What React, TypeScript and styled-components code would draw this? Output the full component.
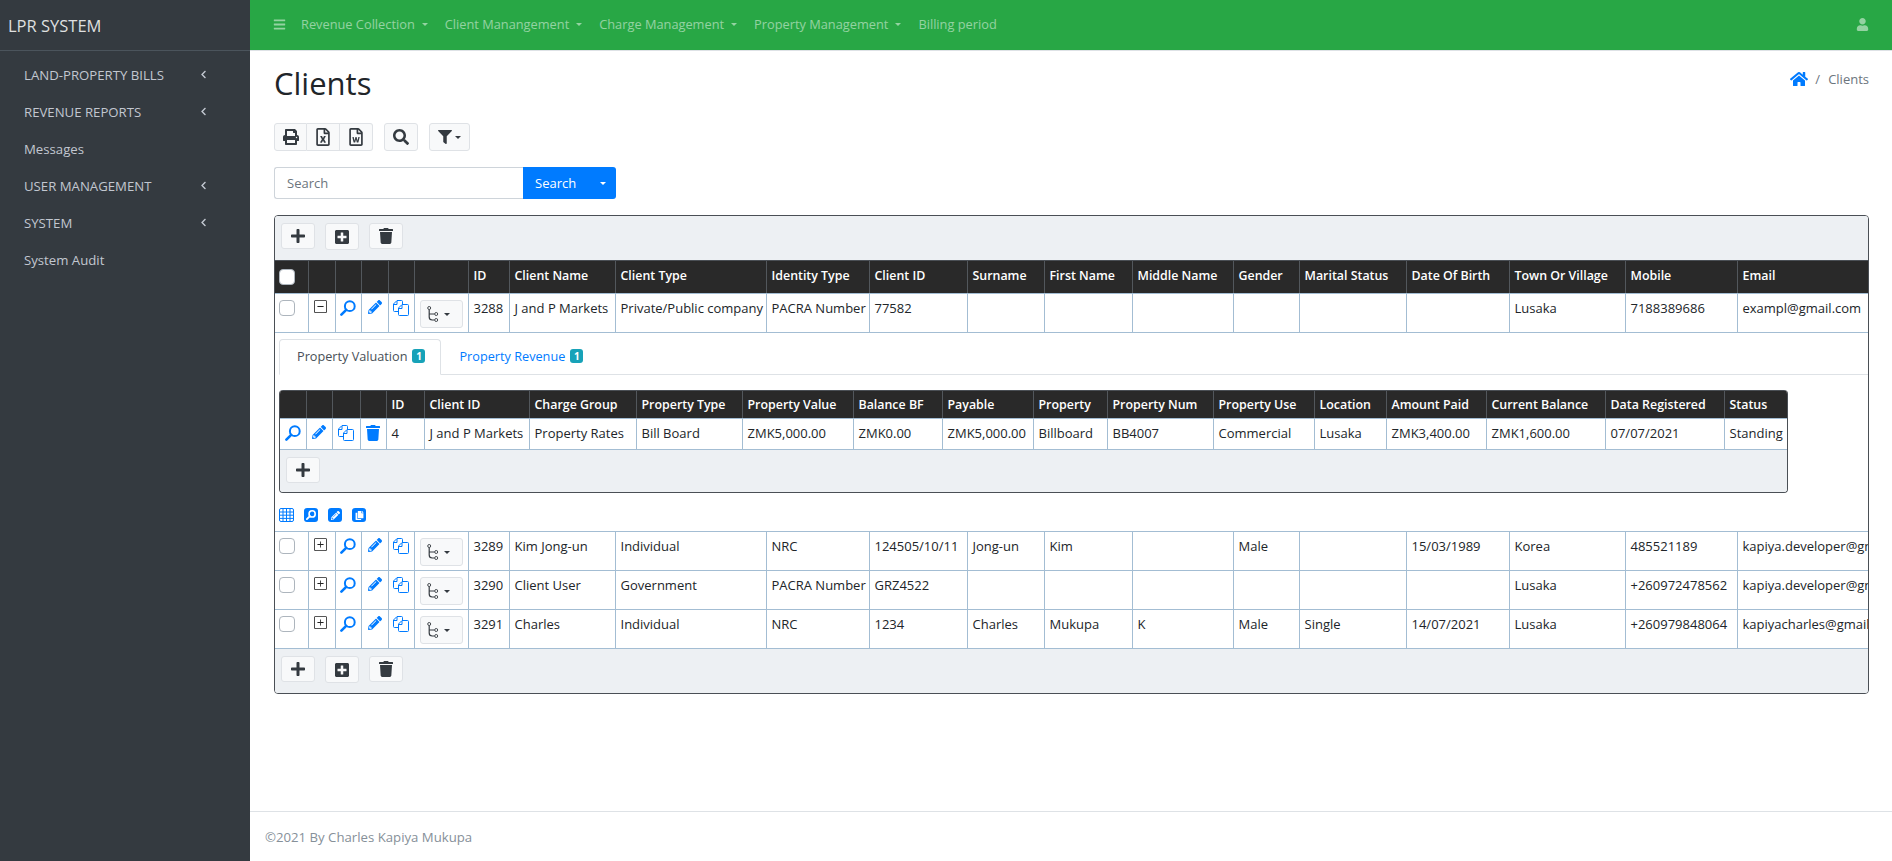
import React from 'react';
import styled, { createGlobalStyle } from 'styled-components';
import {
  FaBars, FaUser, FaHome, FaPrint, FaRegFileExcel, FaRegFileWord, FaSearch, FaFilter,
  FaPlus, FaPlusSquare, FaTrash, FaPencilAlt, FaChevronLeft, FaCopy,
} from 'react-icons/fa';
import { BsDashSquare, BsPlusSquare } from 'react-icons/bs';

const colors = {
  BLUE: '#007bff',
  GREEN: '#28a745',
  SIDEBAR: '#343a40',
  LINE: '#a3bdd3',
  HEAD: '#292929',
  TOOLBAR: '#edf0f3',
  DARK: '#343a40',
};

const GlobalStyle = createGlobalStyle`
  html, body { margin: 0; padding: 0; height: 100%; }
  body {
    font-family: "Open Sans", "Noto Sans", sans-serif;
    font-size: 13px;
    color: #212529;
    background: #fff;
    overflow: hidden;
  }
  * { box-sizing: border-box; }
`;

const mainCols = [33, 27, 26, 27, 26, 54, 41, 106, 151, 103, 98, 77, 88, 101, 66, 107, 103, 116, 112, 300];
const mainHeads = ['ID', 'Client Name', 'Client Type', 'Identity Type', 'Client ID', 'Surname', 'First Name', 'Middle Name', 'Gender', 'Marital Status', 'Date Of Birth', 'Town Or Village', 'Mobile', 'Email'];

const clientRows = [
  ['3289', 'Kim Jong-un', 'Individual', 'NRC', '124505/10/11', 'Jong-un', 'Kim', '', 'Male', '', '15/03/1989', 'Korea', '485521189', 'kapiya.developer@gmail.com'],
  ['3290', 'Client User', 'Government', 'PACRA Number', 'GRZ4522', '', '', '', '', '', '', 'Lusaka', '+260972478562', 'kapiya.developer@gmail.com'],
  ['3291', 'Charles', 'Individual', 'NRC', '1234', 'Charles', 'Mukupa', 'K', 'Male', 'Single', '14/07/2021', 'Lusaka', '+260979848064', 'kapiyacharles@gmail.com'],
];
const firstRow = ['3288', 'J and P Markets', 'Private/Public company', 'PACRA Number', '77582', '', '', '', '', '', '', 'Lusaka', '7188389686', 'exampl@gmail.com'];

const subCols = [26, 26, 28, 26, 38, 105, 107, 106, 111, 89, 91, 74, 106, 101, 72, 100, 119, 119, 65];
const subHeads = ['ID', 'Client ID', 'Charge Group', 'Property Type', 'Property Value', 'Balance BF', 'Payable', 'Property', 'Property Num', 'Property Use', 'Location', 'Amount Paid', 'Current Balance', 'Data Registered', 'Status'];
const subRow = ['4', 'J and P Markets', 'Property Rates', 'Bill Board', 'ZMK5,000.00', 'ZMK0.00', 'ZMK5,000.00', 'Billboard', 'BB4007', 'Commercial', 'Lusaka', 'ZMK3,400.00', 'ZMK1,600.00', '07/07/2021', 'Standing'];

const sideItems = [
  { label: 'LAND-PROPERTY BILLS', more: true },
  { label: 'REVENUE REPORTS', more: true },
  { label: 'Messages', more: false },
  { label: 'USER MANAGEMENT', more: true },
  { label: 'SYSTEM', more: true },
  { label: 'System Audit', more: false },
];

const topItems = [
  { label: 'Revenue Collection', more: true },
  { label: 'Client Manangement', more: true },
  { label: 'Charge Management', more: true },
  { label: 'Property Management', more: true },
  { label: 'Billing period', more: false },
];

const MagnifierIcon = ({ size = 16 }: { size?: number }) => (
  <svg width={size} height={size} viewBox="0 0 16 16" fill="none" stroke={colors.BLUE}>
    <circle cx="9.8" cy="6.2" r="4.9" strokeWidth="2" />
    <path d="M6.2 9.8 1.4 14.6" strokeWidth="2.6" strokeLinecap="round" />
  </svg>
);

const MagnifierWhite = () => (
  <svg width="10" height="10" viewBox="0 0 16 16" fill="none" stroke="#fff">
    <circle cx="9.8" cy="6.2" r="4.9" strokeWidth="2.6" />
    <path d="M6.2 9.8 1.4 14.6" strokeWidth="3" strokeLinecap="round" />
  </svg>
);

const CopyIcon = () => (
  <svg width="16" height="16" viewBox="0 0 16 16" fill="none" stroke={colors.BLUE} strokeWidth="1">
    <path d="M5.5 11.5H1.5a1 1 0 0 1-1-1V4L4 .5h4.5a1 1 0 0 1 1 1V4" />
    <path d="M.5 4.5H4V1" />
    <path d="M6.5 15.5a1 1 0 0 1-1-1V8L9 4.5h5.5a1 1 0 0 1 1 1v9a1 1 0 0 1-1 1z" />
    <path d="M5.5 8.5H9V5" />
  </svg>
);

const BranchIcon = () => (
  <svg width="12" height="16" viewBox="0 0 12 16" fill="none" stroke="#343a40" strokeWidth="0.9">
    <circle cx="2.2" cy="2" r="1.5" />
    <path d="M2.2 3.5V11c0 2 1 3 3 3h2.4M2.2 8h5.4" strokeWidth="1.2" />
    <circle cx="9.2" cy="8" r="1.5" />
    <circle cx="9.2" cy="14" r="1.5" />
  </svg>
);

const GridIcon = () => (
  <svg width="15" height="14" viewBox="0 0 15 14" fill="none" stroke={colors.BLUE} strokeWidth="1">
    <rect x="0.5" y="0.5" width="14" height="13" rx="1.5" />
    <path d="M0 4h15M0 7.2h15M0 10.4h15M4 0v14M7.5 0v14M11 0v14" />
  </svg>
);

const Caret = styled.span<{ $gap?: number; $size?: number }>`
  display: inline-block;
  width: 0;
  height: 0;
  margin-left: ${(p) => p.$gap ?? 6}px;
  border-top: ${(p) => p.$size ?? 4}px solid currentColor;
  border-left: ${(p) => p.$size ?? 4}px solid transparent;
  border-right: ${(p) => p.$size ?? 4}px solid transparent;
`;

const Layout = styled.div`
  display: flex;
  width: 1892px;
  height: 861px;
`;

const Sidebar = styled.aside`
  width: 250px;
  flex: none;
  background: ${colors.SIDEBAR};
  color: #c2c7d0;
`;

const Brand = styled.div`
  height: 51px;
  padding: 0 8px;
  display: flex;
  align-items: center;
  font-size: 16.5px;
  color: rgba(255, 255, 255, 0.85);
  border-bottom: 1px solid #4b545c;
`;

const SideNav = styled.nav`
  padding-top: 5px;
  display: flex;
  flex-direction: column;
`;

const SideItem = styled.a`
  height: 37px;
  padding: 0 42px 0 24px;
  display: flex;
  align-items: center;
  justify-content: space-between;
  font-size: 13.2px;
  font-weight: 500;
  color: #c2c7d0;
`;

const Main = styled.div`
  flex: 1;
  min-width: 0;
  display: flex;
  flex-direction: column;
`;

const TopBar = styled.header`
  height: 51px;
  flex: none;
  display: flex;
  align-items: center;
  padding: 0 23px 2px 23px;
  background: ${colors.GREEN};
  border-bottom: 1px solid #dee2e6;
  color: rgba(255, 255, 255, 0.5);
`;

const TopItem = styled.a`
  display: inline-flex;
  align-items: center;
  margin-right: 17px;
  font-size: 12.8px;
  font-weight: 500;
`;

const BarsWrap = styled.span`
  display: inline-flex;
  margin-right: 15px;
  font-size: 13px;
`;

const UserWrap = styled.span`
  margin-left: auto;
  display: inline-flex;
  font-size: 13px;
`;

const Content = styled.main`
  flex: 1;
  padding: 0 23px 0 24px;
`;

const TitleRow = styled.div`
  height: 72px;
  display: flex;
  justify-content: space-between;
  align-items: flex-start;
`;

const Title = styled.h1`
  margin: 11px 0 0;
  font-size: 31px;
  font-weight: 400;
  line-height: 43px;
  color: #212529;
`;

const Crumbs = styled.div`
  margin-top: 19px;
  display: flex;
  align-items: center;
  font-size: 13px;
  color: #6c757d;
`;

const CrumbSep = styled.span`
  margin: 0 8px 0 7px;
`;

const ToolRow = styled.div`
  display: flex;
  gap: 11px;
  height: 28px;
`;

const BtnGroup = styled.div`
  display: flex;
`;

const ToolBtn = styled.button<{ $w?: number; $h?: number; $icon?: number }>`
  width: ${(p) => p.$w ?? 33}px;
  height: ${(p) => p.$h ?? 28}px;
  padding: 0;
  display: inline-flex;
  align-items: center;
  justify-content: center;
  background: #f8f9fa;
  border: 1px solid #dfe2e6;
  border-radius: 3px;
  color: ${colors.DARK};
  font-size: ${(p) => p.$icon ?? 16}px;
`;

const GroupBtn = styled(ToolBtn)`
  border-radius: 0;
  border-left: none;

  &:first-child {
    border-radius: 3px 0 0 3px;
    border-left: 1px solid #dfe2e6;
  }

  &:last-child {
    border-radius: 0 3px 3px 0;
  }
`;

const SearchRow = styled.div`
  display: flex;
  margin-top: 16px;
  height: 32px;
`;

const SearchInput = styled.input`
  width: 249px;
  height: 32px;
  padding: 0 12px;
  border: 1px solid #ced4da;
  border-right: none;
  border-radius: 3px 0 0 3px;
  font: inherit;
  font-size: 13px;

  &::placeholder {
    color: #6c757d;
  }
`;

const SearchBtn = styled.button`
  width: 93px;
  height: 32px;
  padding: 0 10px 0 12px;
  display: flex;
  align-items: center;
  justify-content: space-between;
  background: ${colors.BLUE};
  border: none;
  border-radius: 0 3px 3px 0;
  color: #fff;
  font: inherit;
  font-size: 13px;
`;

const Card = styled.section`
  margin-top: 16px;
  width: 1595px;
  border: 1px solid #4a4f55;
  border-radius: 4px;
  overflow: hidden;
`;

const TableBar = styled.div<{ $h: number }>`
  height: ${(p) => p.$h}px;
  padding: 7px 0 0 6px;
  display: flex;
  align-items: flex-start;
  gap: 10px;
  background: ${colors.TOOLBAR};
`;

const Grid = styled.table<{ $w: number }>`
  width: ${(p) => p.$w}px;
  table-layout: fixed;
  border-collapse: collapse;
  font-size: 13px;
`;

const Col = styled.col<{ $w: number }>`
  width: ${(p) => p.$w}px;
`;

const HeadCell = styled.th<{ $h?: number }>`
  height: ${(p) => p.$h ?? 33}px;
  padding: 0 5px 3px;
  text-align: left;
  background: ${colors.HEAD};
  color: #fff;
  font-size: 12.4px;
  font-weight: 600;
  white-space: nowrap;
  overflow: hidden;
  border-left: 1px solid #52575c;
  border-top: 1px solid #4a4f55;
  border-bottom: 1px solid #a3bdd3;

  &:first-child {
    border-left: none;
  }
`;

const SubHeadCell = styled(HeadCell)`
  padding-bottom: 0;
`;

const HeadCheckCell = styled(HeadCell)`
  padding: 0 0 0 4px;
  line-height: 0;
`;

const BodyRow = styled.tr<{ $h?: number }>`
  height: ${(p) => p.$h ?? 39}px;
`;

const Cell = styled.td<{ $pad?: number }>`
  padding: ${(p) => p.$pad ?? 5}px 5px 0;
  vertical-align: top;
  white-space: nowrap;
  overflow: hidden;
  border-left: 1px solid ${colors.LINE};
  border-bottom: 1px solid ${colors.LINE};

  &:first-child {
    border-left: none;
  }
`;

const IconCell = styled(Cell)`
  padding: 6px 0 0;
  text-align: center;
  line-height: 0;
`;

const ExpandCell = styled(IconCell)`
  padding-right: 3px;
`;

const CheckCell = styled(Cell)`
  padding: 6px 0 0 4px;
  line-height: 0;
`;

const CheckBox = styled.input.attrs({ type: 'checkbox' })`
  appearance: none;
  width: 16px;
  height: 16px;
  margin: 0;
  background: #fff;
  border: 1px solid #adb5bd;
  border-radius: 4px;
`;

const ExpandGlyph = styled.span`
  display: inline-flex;
  font-size: 13px;
  color: #222;
  stroke: currentColor;
  stroke-width: 0.4px;
`;

const BlueGlyph = styled.span`
  display: inline-flex;
  color: ${colors.BLUE};
  font-size: 14px;
`;

const TrashGlyph = styled(BlueGlyph)`
  font-size: 16px;
`;

const RowMenu = styled.button`
  width: 43px;
  height: 28px;
  padding: 0 6px 0 0;
  margin-left: 5px;
  display: flex;
  align-items: center;
  justify-content: center;
  background: #f8f9fa;
  border: 1px solid #dfe2e6;
  border-radius: 3px;
  color: ${colors.DARK};
`;

const DetailCell = styled.td`
  height: 199px;
  padding: 6px 0 0 4px;
  vertical-align: top;
  border-bottom: 1px solid ${colors.LINE};
`;

const Tabs = styled.div`
  height: 36px;
  display: flex;
  border-bottom: 1px solid #dee2e6;
`;

const Tab = styled.a<{ $active?: boolean }>`
  height: 36px;
  padding: 0 15px 3px 17px;
  display: flex;
  align-items: center;
  gap: 5px;
  font-size: 12.7px;
  color: ${(p) => (p.$active ? '#495057' : colors.BLUE)};
  background: ${(p) => (p.$active ? '#fff' : 'transparent')};
  border: 1px solid ${(p) => (p.$active ? '#dee2e6' : 'transparent')};
  border-bottom-color: ${(p) => (p.$active ? '#fff' : 'transparent')};
  border-radius: 4px 4px 0 0;
`;

const Badge = styled.span`
  width: 13px;
  height: 14px;
  display: flex;
  align-items: center;
  justify-content: center;
  background: #17a2b8;
  border-radius: 3px;
  color: #fff;
  font-size: 10px;
  font-weight: 700;
`;

const SubCard = styled.div`
  margin-top: 15px;
  width: 1509px;
  border: 1px solid #4a4f55;
  border-top: none;
  border-radius: 4px;
  overflow: hidden;
`;

const GridLinks = styled.div`
  margin-top: 15px;
  display: flex;
  align-items: center;
  gap: 10px;
`;

const SquareLink = styled.span`
  width: 14px;
  height: 14px;
  display: inline-flex;
  align-items: center;
  justify-content: center;
  background: ${colors.BLUE};
  border-radius: 3px;
  color: #fff;
  font-size: 9px;
`;

const Footer = styled.footer`
  height: 50px;
  flex: none;
  padding: 0 0 0 15px;
  display: flex;
  align-items: center;
  margin-top: auto;
  border-top: 1px solid #dee2e6;
  font-size: 13.2px;
  color: #869099;
`;

const Toolbar = () => (
  <TableBar $h={44}>
    <ToolBtn $w={34} $h={26}><FaPlus /></ToolBtn>
    <ToolBtn $w={34} $h={27}><FaPlusSquare /></ToolBtn>
    <ToolBtn $w={34} $h={26}><FaTrash /></ToolBtn>
  </TableBar>
);

const RowControls = ({ open }: { open?: boolean }) => (
  <>
    <CheckCell><CheckBox /></CheckCell>
    <ExpandCell><ExpandGlyph>{open ? <BsDashSquare /> : <BsPlusSquare />}</ExpandGlyph></ExpandCell>
    <IconCell><MagnifierIcon /></IconCell>
    <IconCell><BlueGlyph><FaPencilAlt /></BlueGlyph></IconCell>
    <IconCell><CopyIcon /></IconCell>
    <IconCell><RowMenu><BranchIcon /><Caret $gap={5} $size={3} /></RowMenu></IconCell>
  </>
);

const App: React.FC = () => (
  <Layout>
    <GlobalStyle />
    <Sidebar>
      <Brand>LPR SYSTEM</Brand>
      <SideNav>
        {sideItems.map((item) => (
          <SideItem key={item.label}>
            {item.label}
            {item.more && <FaChevronLeft size={9} />}
          </SideItem>
        ))}
      </SideNav>
    </Sidebar>
    <Main>
      <TopBar>
        <BarsWrap><FaBars /></BarsWrap>
        {topItems.map((item) => (
          <TopItem key={item.label}>
            {item.label}
            {item.more && <Caret $gap={7} $size={3} />}
          </TopItem>
        ))}
        <UserWrap><FaUser /></UserWrap>
      </TopBar>
      <Content>
        <TitleRow>
          <Title>Clients</Title>
          <Crumbs>
            <FaHome color={colors.BLUE} size={18} />
            <CrumbSep>/</CrumbSep>
            Clients
          </Crumbs>
        </TitleRow>
        <ToolRow>
          <BtnGroup>
            <GroupBtn><FaPrint /></GroupBtn>
            <GroupBtn $icon={18}><FaRegFileExcel /></GroupBtn>
            <GroupBtn $icon={18}><FaRegFileWord /></GroupBtn>
          </BtnGroup>
          <ToolBtn $w={34}><FaSearch /></ToolBtn>
          <ToolBtn $w={41} $icon={14}><FaFilter /><Caret $gap={3} $size={3} /></ToolBtn>
        </ToolRow>
        <SearchRow>
          <SearchInput placeholder="Search" />
          <SearchBtn>Search<Caret $size={3} /></SearchBtn>
        </SearchRow>
        <Card>
          <Toolbar />
          <Grid $w={1762}>
            <colgroup>{mainCols.map((w, i) => <Col key={i} $w={w} />)}</colgroup>
            <thead>
              <tr>
                <HeadCheckCell><CheckBox /></HeadCheckCell>
                <HeadCell /><HeadCell /><HeadCell /><HeadCell /><HeadCell />
                {mainHeads.map((h) => <HeadCell key={h}>{h}</HeadCell>)}
              </tr>
            </thead>
            <tbody>
              <BodyRow>
                <RowControls open />
                {firstRow.map((v, i) => <Cell key={i}>{v}</Cell>)}
              </BodyRow>
              <tr>
                <DetailCell colSpan={20}>
                  <Tabs>
                    <Tab $active>Property Valuation <Badge>1</Badge></Tab>
                    <Tab>Property Revenue <Badge>1</Badge></Tab>
                  </Tabs>
                  <SubCard>
                    <Grid $w={1507}>
                      <colgroup>{subCols.map((w, i) => <Col key={i} $w={w} />)}</colgroup>
                      <thead>
                        <tr>
                          <SubHeadCell $h={28} /><SubHeadCell $h={28} /><SubHeadCell $h={28} /><SubHeadCell $h={28} />
                          {subHeads.map((h) => <SubHeadCell key={h} $h={28}>{h}</SubHeadCell>)}
                        </tr>
                      </thead>
                      <tbody>
                        <BodyRow $h={31}>
                          <IconCell><MagnifierIcon /></IconCell>
                          <IconCell><BlueGlyph><FaPencilAlt /></BlueGlyph></IconCell>
                          <IconCell><CopyIcon /></IconCell>
                          <IconCell><TrashGlyph><FaTrash /></TrashGlyph></IconCell>
                          {subRow.map((v, i) => <Cell key={i}>{v}</Cell>)}
                        </BodyRow>
                      </tbody>
                    </Grid>
                    <TableBar $h={42}>
                      <ToolBtn $w={34} $h={26}><FaPlus /></ToolBtn>
                    </TableBar>
                  </SubCard>
                  <GridLinks>
                    <GridIcon />
                    <SquareLink><MagnifierWhite /></SquareLink>
                    <SquareLink><FaPencilAlt /></SquareLink>
                    <SquareLink><FaCopy /></SquareLink>
                  </GridLinks>
                </DetailCell>
              </tr>
              {clientRows.map((row) => (
                <BodyRow key={row[0]}>
                  <RowControls />
                  {row.map((v, i) => <Cell key={i}>{v}</Cell>)}
                </BodyRow>
              ))}
            </tbody>
          </Grid>
          <Toolbar />
        </Card>
      </Content>
      <Footer>©2021 By Charles Kapiya Mukupa</Footer>
    </Main>
  </Layout>
);

export default App;
